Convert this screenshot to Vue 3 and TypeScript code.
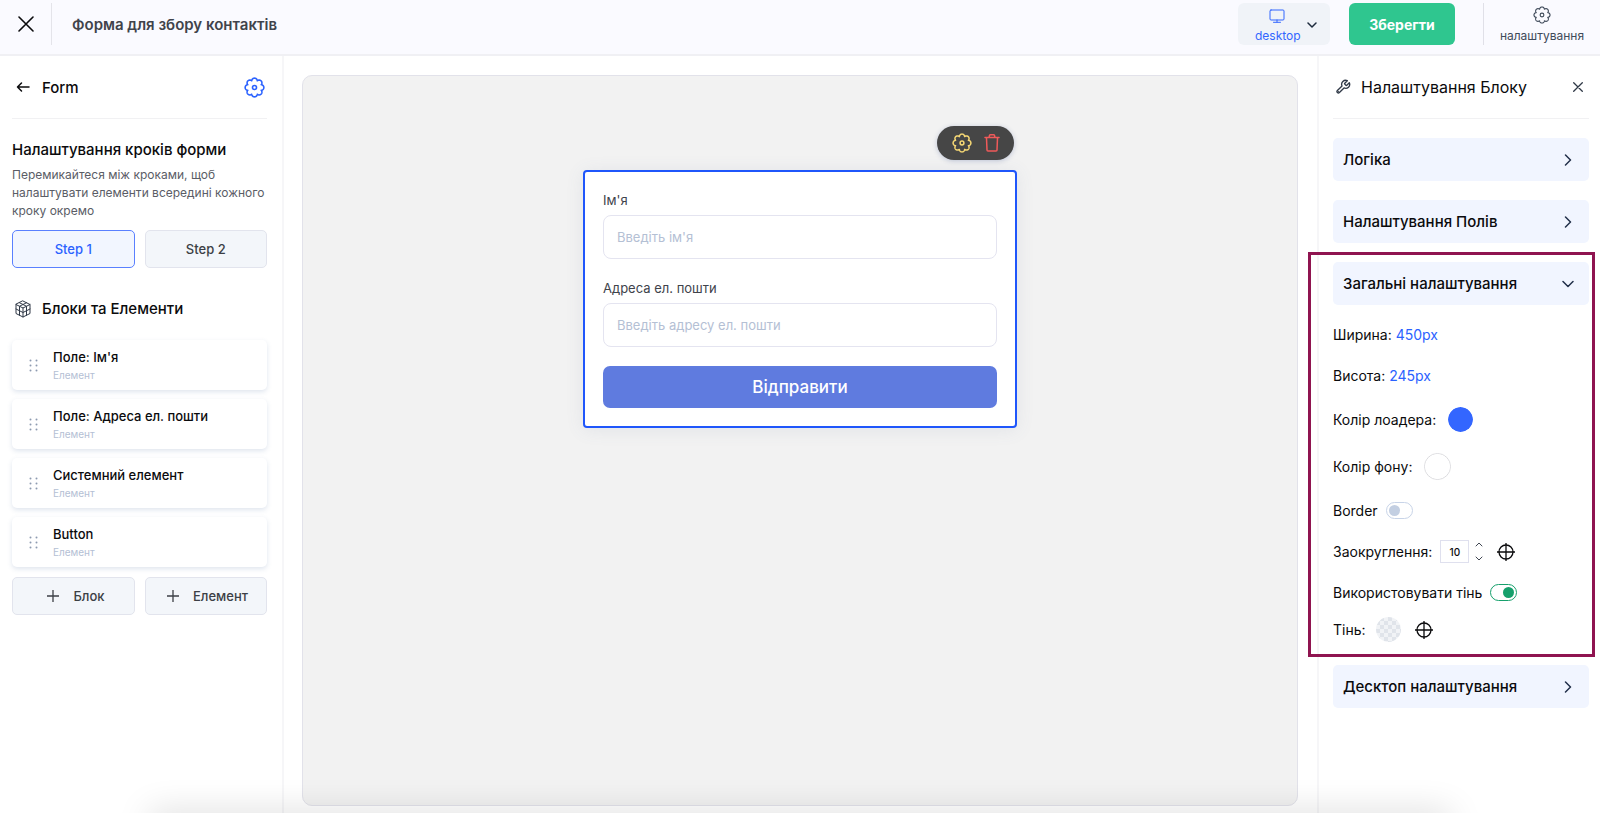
<script setup lang="ts">
import { ref } from 'vue'

interface BlockItem {
  title: string
  kind: string
}

const steps: string[] = ['Step 1', 'Step 2']
const activeStep = ref(0)

const blocks: BlockItem[] = [
  { title: "Поле: Ім'я", kind: 'Елемент' },
  { title: 'Поле: Адреса ел. пошти', kind: 'Елемент' },
  { title: 'Системний елемент', kind: 'Елемент' },
  { title: 'Button', kind: 'Елемент' },
]

const device = ref('desktop')
const loaderColor = ref('#3366ff')
const backgroundColor = ref('#ffffff')
const hasBorder = ref(false)
const hasShadow = ref(true)
const radius = ref(10)

/* Outline of a cog with eight rounded lobes, centred in a 24 unit box. */
function cogOutline(): string {
  const points: string[] = []
  for (let i = 0; i < 128; i++) {
    const a = (i / 128) * Math.PI * 2
    const r = 8.3 + 2.4 * Math.pow(Math.abs(Math.cos(4 * a)), 0.7)
    points.push(`${(12 + r * Math.sin(a)).toFixed(2)} ${(12 - r * Math.cos(a)).toFixed(2)}`)
  }
  return `M${points.join('L')}Z`
}
const cog = cogOutline()
</script>

<template>
  <div class="app">
    <header class="topbar">
      <button class="icon-btn close" type="button" aria-label="Закрити">
        <svg width="16" height="16" viewBox="0 0 16 16"><path d="M1 1l14 14M15 1L1 15" /></svg>
      </button>
      <h1 class="title">Форма для збору контактів</h1>
      <div class="device">
        <svg class="monitor" width="16" height="14" viewBox="0 0 16 14"><path d="M2 1h12a1 1 0 0 1 1 1v8a1 1 0 0 1-1 1H2a1 1 0 0 1-1-1V2a1 1 0 0 1 1-1zM8 11v2M4.500 13.300h7" /></svg>
        <select v-model="device" aria-label="Пристрій">
          <option>desktop</option>
          <option>mobile</option>
        </select>
        <svg class="caret" width="10" height="6" viewBox="0 0 10 6"><path d="M1 1l4 4 4-4" /></svg>
      </div>
      <button class="save" type="button">Зберегти</button>
      <button class="settings" type="button">
        <svg width="18" height="18" viewBox="0 0 24 24"><path :d="cog" /><circle cx="12" cy="12" r="2.500" /></svg>
        <span>налаштування</span>
      </button>
    </header>

    <div class="body">
      <aside class="left">
        <div class="panel-head">
          <button class="icon-btn back" type="button" aria-label="Назад">
            <svg width="14" height="12" viewBox="0 0 14 12"><path d="M13 6H1.500M5.500 2L1.500 6l4 4" /></svg>
          </button>
          <h2>Form</h2>
          <button class="icon-btn form-cog" type="button" aria-label="Налаштування форми">
            <svg width="21" height="21" viewBox="0 0 24 24"><path :d="cog" /><circle cx="12" cy="12" r="2.300" /></svg>
          </button>
        </div>

        <h3 class="steps-title">Налаштування кроків форми</h3>
        <p class="hint">Перемикайтеся між кроками, щоб налаштувати елементи всередині кожного кроку окремо</p>
        <div class="pair">
          <button
            v-for="(step, i) in steps"
            :key="step"
            type="button"
            class="soft-btn"
            :class="{ active: i === activeStep }"
            @click="activeStep = i"
          >{{ step }}</button>
        </div>

        <h3 class="blocks-title">
          <svg width="18" height="18" viewBox="0 0 18 18">
            <path d="M9 1l7 3.500v9L9 17l-7-3.500v-9zM2 4.500L9 8l7-3.500M9 8v9M5.500 2.750l7 3.500v9M12.500 2.750l-7 3.500v9M2 9l7 3.500L16 9" />
          </svg>
          Блоки та Елементи
        </h3>
        <ul class="cards">
          <li v-for="block in blocks" :key="block.title" class="card">
            <svg width="9" height="13" viewBox="0 0 9 13">
              <circle cx="1.500" cy="1.500" r="1" /><circle cx="7.500" cy="1.500" r="1" />
              <circle cx="1.500" cy="6.500" r="1" /><circle cx="7.500" cy="6.500" r="1" />
              <circle cx="1.500" cy="11.500" r="1" /><circle cx="7.500" cy="11.500" r="1" />
            </svg>
            <div>
              <strong>{{ block.title }}</strong>
              <small>{{ block.kind }}</small>
            </div>
          </li>
        </ul>
        <div class="pair">
          <button v-for="name in ['Блок', 'Елемент']" :key="name" type="button" class="soft-btn add">
            <svg width="12" height="12" viewBox="0 0 12 12"><path d="M6 0v12M0 6h12" /></svg>
            {{ name }}
          </button>
        </div>
      </aside>

      <main class="stage">
        <div class="canvas">
          <form class="form" @submit.prevent>
            <div class="tools">
              <button class="icon-btn tool-cog" type="button" aria-label="Налаштування блоку">
                <svg width="20" height="20" viewBox="0 0 24 24"><path :d="cog" /><circle cx="12" cy="12" r="2.300" /></svg>
              </button>
              <button class="icon-btn tool-bin" type="button" aria-label="Видалити">
                <svg width="16" height="18" viewBox="0 0 16 18"><path d="M1 3.500h14M5 3.500l.5-2a1 1 0 0 1 1-.7h3a1 1 0 0 1 1 .7l.5 2M2.500 4l.5 12a1 1 0 0 0 1 1h8a1 1 0 0 0 1-1l.5-12" /></svg>
              </button>
            </div>
            <label for="name">Ім'я</label>
            <input id="name" type="text" placeholder="Введіть ім'я" />
            <label for="email">Адреса ел. пошти</label>
            <input id="email" type="email" placeholder="Введіть адресу ел. пошти" />
            <button class="submit" type="submit">Відправити</button>
          </form>
        </div>
      </main>

      <aside class="right">
        <div class="panel-head">
          <svg class="wrench" width="16" height="16" viewBox="0 0 24 24"><path d="M14.700 6.300a1 1 0 0 0 0 1.400l1.600 1.600a1 1 0 0 0 1.400 0l3.770-3.770a6 6 0 0 1-7.940 7.940l-6.910 6.910a2.120 2.120 0 0 1-3-3l6.910-6.910a6 6 0 0 1 7.940-7.940l-3.760 3.760z" /><path d="M5 19l.1-.1" /></svg>
          <h2>Налаштування Блоку</h2>
          <button class="icon-btn close-small" type="button" aria-label="Закрити панель">
            <svg width="10" height="10" viewBox="0 0 10 10"><path d="M.7.7l8.600 8.600M9.300.7L.7 9.300" /></svg>
          </button>
        </div>

        <button class="fold" type="button">
          Логіка<svg width="8" height="12" viewBox="0 0 8 12"><path d="M1.500 1l5 5-5 5" /></svg>
        </button>
        <button class="fold" type="button">
          Налаштування Полів<svg width="8" height="12" viewBox="0 0 8 12"><path d="M1.500 1l5 5-5 5" /></svg>
        </button>

        <section class="general">
          <button class="fold" type="button" aria-expanded="true">
            Загальні налаштування<svg class="open" width="12" height="8" viewBox="0 0 12 8"><path d="M1 1.500l5 5 5-5" /></svg>
          </button>
          <div class="rows">
            <div class="row">Ширина:&nbsp;<a href="#">450px</a></div>
            <div class="row">Висота:&nbsp;<a href="#">245px</a></div>
            <div class="row tall">
              <label for="loader">Колір лоадера:</label>
              <input id="loader" v-model="loaderColor" class="swatch" type="color" />
            </div>
            <div class="row tall">
              <label for="bg">Колір фону:</label>
              <input id="bg" v-model="backgroundColor" class="swatch outlined" type="color" />
            </div>
            <div class="row">
              <label for="border">Border</label>
              <input id="border" v-model="hasBorder" class="toggle" type="checkbox" />
            </div>
            <div class="row">
              <label for="radius">Заокруглення:</label>
              <input id="radius" v-model="radius" class="number" type="number" />
              <span class="spin">
                <button type="button" aria-label="Більше" @click="radius++">
                  <svg width="8" height="5" viewBox="0 0 8 5"><path d="M1 4l3-3 3 3" /></svg>
                </button>
                <button type="button" aria-label="Менше" @click="radius--">
                  <svg width="8" height="5" viewBox="0 0 8 5"><path d="M1 1l3 3 3-3" /></svg>
                </button>
              </span>
              <button class="icon-btn target" type="button" aria-label="Окремі кути">
                <svg width="18" height="18" viewBox="0 0 18 18"><circle cx="9" cy="9" r="7" /><path d="M9 0v18M0 9h18" /></svg>
              </button>
            </div>
            <div class="row">
              <label for="shadow">Використовувати тінь</label>
              <input id="shadow" v-model="hasShadow" class="toggle" type="checkbox" />
            </div>
            <div class="row low">
              <span>Тінь:</span>
              <button class="checker" type="button" aria-label="Колір тіні"></button>
              <button class="icon-btn target" type="button" aria-label="Зміщення тіні">
                <svg width="18" height="18" viewBox="0 0 18 18"><circle cx="9" cy="9" r="7" /><path d="M9 0v18M0 9h18" /></svg>
              </button>
            </div>
          </div>
          <div class="marker"></div>
        </section>

        <button class="fold" type="button">
          Десктоп налаштування<svg width="8" height="12" viewBox="0 0 8 12"><path d="M1.500 1l5 5-5 5" /></svg>
        </button>
      </aside>
    </div>
    <div class="bottom-shade"></div>
  </div>
</template>

<style>
body {
  margin: 0;
  background: #fff;
}
</style>

<style scoped>
.app {
  position: relative;
  display: flex;
  flex-direction: column;
  min-height: 100vh;
  overflow: hidden;
  font-family: Inter, "Liberation Sans", sans-serif;
  font-size: 14px;
  color: #0b0b0d;
}
.app *,
.app *::before {
  box-sizing: border-box;
}
h1,
h2,
h3,
p,
ul {
  margin: 0;
  padding: 0;
}
button,
input,
select {
  font: inherit;
  color: inherit;
  margin: 0;
}
button {
  cursor: pointer;
}
svg {
  display: block;
  flex: none;
  fill: none;
  stroke: currentColor;
  stroke-linecap: round;
  stroke-linejoin: round;
}
.icon-btn {
  display: grid;
  place-items: center;
  padding: 0;
  border: 0;
  background: none;
}

.topbar {
  display: flex;
  align-items: flex-start;
  height: 56px;
  padding: 3px 0 0;
  background: #fafaff;
  border-bottom: 2px solid #f0f0f4;
}
.close {
  width: 52px;
  height: 42px;
  border-right: 1px solid #e4e4ea;
}
.close svg {
  stroke-width: 1.600;
}
.title {
  flex: 1;
  padding-left: 20px;
  font-size: 15px;
  line-height: 44px;
  font-weight: 600;
  color: #40434b;
}
.device {
  position: relative;
  width: 92px;
  height: 42px;
  margin-right: 19px;
  color: #3366ff;
}
.device select {
  width: 100%;
  height: 100%;
  padding: 24px 0 0 17px;
  border: 0;
  border-radius: 6px;
  appearance: none;
  background: #f0f3f8;
  font-size: 12px;
  line-height: 18px;
}
.monitor {
  position: absolute;
  top: 6px;
  left: 31px;
  pointer-events: none;
}
.caret {
  position: absolute;
  top: 19px;
  right: 13px;
  color: #1d2b3d;
  stroke-width: 1.500;
  pointer-events: none;
}
.save {
  width: 106px;
  height: 42px;
  padding: 0;
  border: 0;
  border-radius: 6px;
  background: #2fc68f;
  color: #fff;
  font-size: 14px;
  font-weight: 700;
}
.settings {
  display: flex;
  flex-direction: column;
  align-items: center;
  gap: 4px;
  width: 117px;
  height: 42px;
  margin-left: 28px;
  padding: 3px 0 0;
  border: 0;
  border-left: 1px solid #e0e0e8;
  background: none;
  color: #3f4a5a;
  font-size: 12px;
  line-height: 16px;
}
.settings svg {
  stroke-width: 1.500;
}

.body {
  display: flex;
  flex: 1;
}
.left {
  flex: none;
  width: 284px;
  padding: 0 15px 0 12px;
  border-right: 2px solid #f6f6f8;
}
.right {
  flex: none;
  width: 283px;
  padding: 0 11px 0 14px;
  border-left: 2px solid #f6f6f8;
}
.panel-head {
  display: flex;
  align-items: center;
  height: 63px;
  border-bottom: 1px solid #f1f1f3;
}
.panel-head h2 {
  flex: 1;
  font-size: 16px;
  font-weight: 400;
}
.left .panel-head h2 {
  font-size: 15px;
  font-weight: 500;
}
.back {
  width: 22px;
  height: 22px;
  margin-right: 8px;
}
.back svg {
  stroke-width: 1.500;
}
.form-cog {
  margin-right: 2px;
  color: #2b62ff;
}
.form-cog svg,
.tool-cog svg {
  stroke-width: 1.800;
}
.steps-title {
  margin-top: 20px;
  font-size: 15px;
  line-height: 22px;
  font-weight: 500;
}
.hint {
  margin: 5px 0 10px;
  font-size: 12px;
  line-height: 18px;
  color: #5a5d66;
}
.pair {
  display: grid;
  grid-template-columns: 1fr 1fr;
  gap: 10px;
}
.soft-btn {
  height: 38px;
  padding: 0;
  border: 1px solid #e2e4ed;
  border-radius: 5px;
  background: #f3f6fa;
  color: #3c3f45;
  font-size: 13px;
  font-weight: 500;
}
.soft-btn.active {
  border-color: #5a80ff;
  background: #f2f6ff;
  color: #2b62ff;
}
.soft-btn.add {
  display: flex;
  align-items: center;
  justify-content: flex-end;
  gap: 14px;
  padding-right: 18px;
}
.soft-btn.add:first-child {
  padding-right: 29px;
}
.add svg {
  stroke-width: 1.300;
}
.blocks-title {
  display: flex;
  align-items: center;
  gap: 10px;
  margin: 30px 0 20px 2px;
  font-size: 15px;
  line-height: 22px;
  font-weight: 500;
}
.blocks-title svg {
  color: #303947;
}
.cards {
  display: grid;
  gap: 9px;
  margin-bottom: 10px;
  list-style: none;
}
.card {
  display: flex;
  align-items: center;
  gap: 15px;
  height: 50px;
  padding-left: 17px;
  border-radius: 5px;
  background: #fff;
  box-shadow: 0 2px 5px rgba(80, 110, 160, 0.18);
}
.card svg {
  fill: #8d9ab0;
  stroke: none;
}
.card strong {
  display: block;
  font-size: 13px;
  line-height: 20px;
  font-weight: 500;
}
.card small {
  display: block;
  font-size: 10px;
  line-height: 16px;
  color: #b4c0d4;
}

.stage {
  display: flex;
  flex: 1;
  min-width: 0;
  padding: 19px 19px 7px 18px;
}
.canvas {
  flex: 1;
  padding-top: 94px;
  border: 1px solid #e2e2ea;
  border-radius: 10px;
  background: #f2f2f2;
}
.form {
  position: relative;
  display: flex;
  flex-direction: column;
  width: 434px;
  margin: 0 auto;
  padding: 18px;
  border: 2px solid #1f56fb;
  border-radius: 4px;
  background: #fff;
  box-shadow: 0 2px 18px rgba(90, 110, 150, 0.1);
}
.form label {
  font-size: 13px;
  line-height: 20px;
  color: #40434b;
}
.form input {
  height: 44px;
  margin: 5px 0 19px;
  padding: 0 13px;
  border: 1px solid #e4e4f0;
  border-radius: 8px;
  background: #fff;
  font-size: 13px;
}
.form input::placeholder {
  color: #b4c0d4;
  opacity: 1;
}
.submit {
  height: 42px;
  padding: 0;
  border: 0;
  border-radius: 7px;
  background: #5f7bdf;
  color: #fff;
  font-size: 17px;
  font-weight: 500;
}
.tools {
  position: absolute;
  top: -46px;
  right: 1px;
  display: flex;
  align-items: center;
  justify-content: center;
  gap: 12px;
  width: 77px;
  height: 34px;
  border-radius: 17px;
  background: #464646;
  box-shadow: 0 1px 5px rgba(70, 90, 150, 0.3);
}
.tool-cog {
  color: #f5d774;
}
.tool-bin {
  color: #f05a5a;
}
.tool-bin svg {
  stroke-width: 1.500;
}

.wrench {
  margin: 0 10px 0 2px;
  color: #303947;
  stroke-width: 2;
}
.close-small {
  margin-right: 6px;
  color: #303947;
}
.close-small svg {
  stroke-width: 1.300;
}
.fold {
  display: flex;
  align-items: center;
  justify-content: space-between;
  width: 100%;
  height: 43px;
  margin-top: 19px;
  padding: 0 17px 0 10px;
  border: 0;
  border-radius: 5px;
  background: #f1f5ff;
  font-size: 15px;
  font-weight: 500;
}
.fold svg {
  color: #22304a;
  stroke-width: 1.500;
}
.fold .open {
  margin-right: -2px;
}
.general {
  position: relative;
}
.rows {
  padding-top: 9px;
}
.row {
  display: flex;
  align-items: center;
  height: 41px;
}
.row.tall {
  height: 47px;
}
.row.low {
  height: 33px;
}
.row a {
  color: #2b62ff;
  text-decoration: none;
}
.swatch {
  width: 25px;
  height: 25px;
  margin-left: 12px;
  padding: 0;
  border: 0;
  border-radius: 50%;
  appearance: none;
  background: none;
  overflow: hidden;
}
.swatch::-webkit-color-swatch-wrapper {
  padding: 0;
}
.swatch::-webkit-color-swatch {
  border: 0;
  border-radius: 50%;
}
.swatch.outlined {
  width: 27px;
  height: 27px;
  border: 1px solid #dcdcdf;
}
.toggle {
  width: 27px;
  height: 17px;
  margin-left: 8px;
  border: 1px solid #c8d4e8;
  border-radius: 9px;
  appearance: none;
  background: #fff;
}
.toggle::before {
  content: "";
  display: block;
  width: 11px;
  height: 11px;
  margin: 2px;
  border-radius: 50%;
  background: #c3cfe2;
}
.toggle:checked {
  border-color: #16a06c;
}
.toggle:checked::before {
  margin-left: 12px;
  background: #16a06c;
}
.number {
  width: 29px;
  height: 23px;
  margin-left: 8px;
  padding: 0;
  border: 1px solid #dfe0ee;
  appearance: textfield;
  background: #fff;
  font-size: 10px;
  font-weight: 500;
  text-align: center;
}
.number::-webkit-inner-spin-button {
  appearance: none;
  margin: 0;
}
.spin {
  display: grid;
  gap: 9px;
  margin-left: 6px;
}
.spin button {
  padding: 0;
  border: 0;
  background: none;
  color: #404652;
}
.target {
  margin-left: 14px;
}
.target svg {
  stroke-width: 1.300;
}
.checker {
  width: 25px;
  height: 25px;
  margin-left: 10px;
  padding: 0;
  border: 0;
  border-radius: 50%;
  background: repeating-conic-gradient(#e0e4ea 0% 25%, #f1f3f6 0% 50%) 0 0 / 8px 8px;
}
.marker {
  position: absolute;
  top: -10px;
  right: -6px;
  bottom: -11px;
  left: -25px;
  border: 3px solid #8f1450;
  pointer-events: none;
}
.bottom-shade {
  position: absolute;
  right: 150px;
  bottom: -20px;
  left: 150px;
  height: 20px;
  box-shadow: 0 0 34px rgba(0, 0, 0, 0.17);
  pointer-events: none;
}
</style>
